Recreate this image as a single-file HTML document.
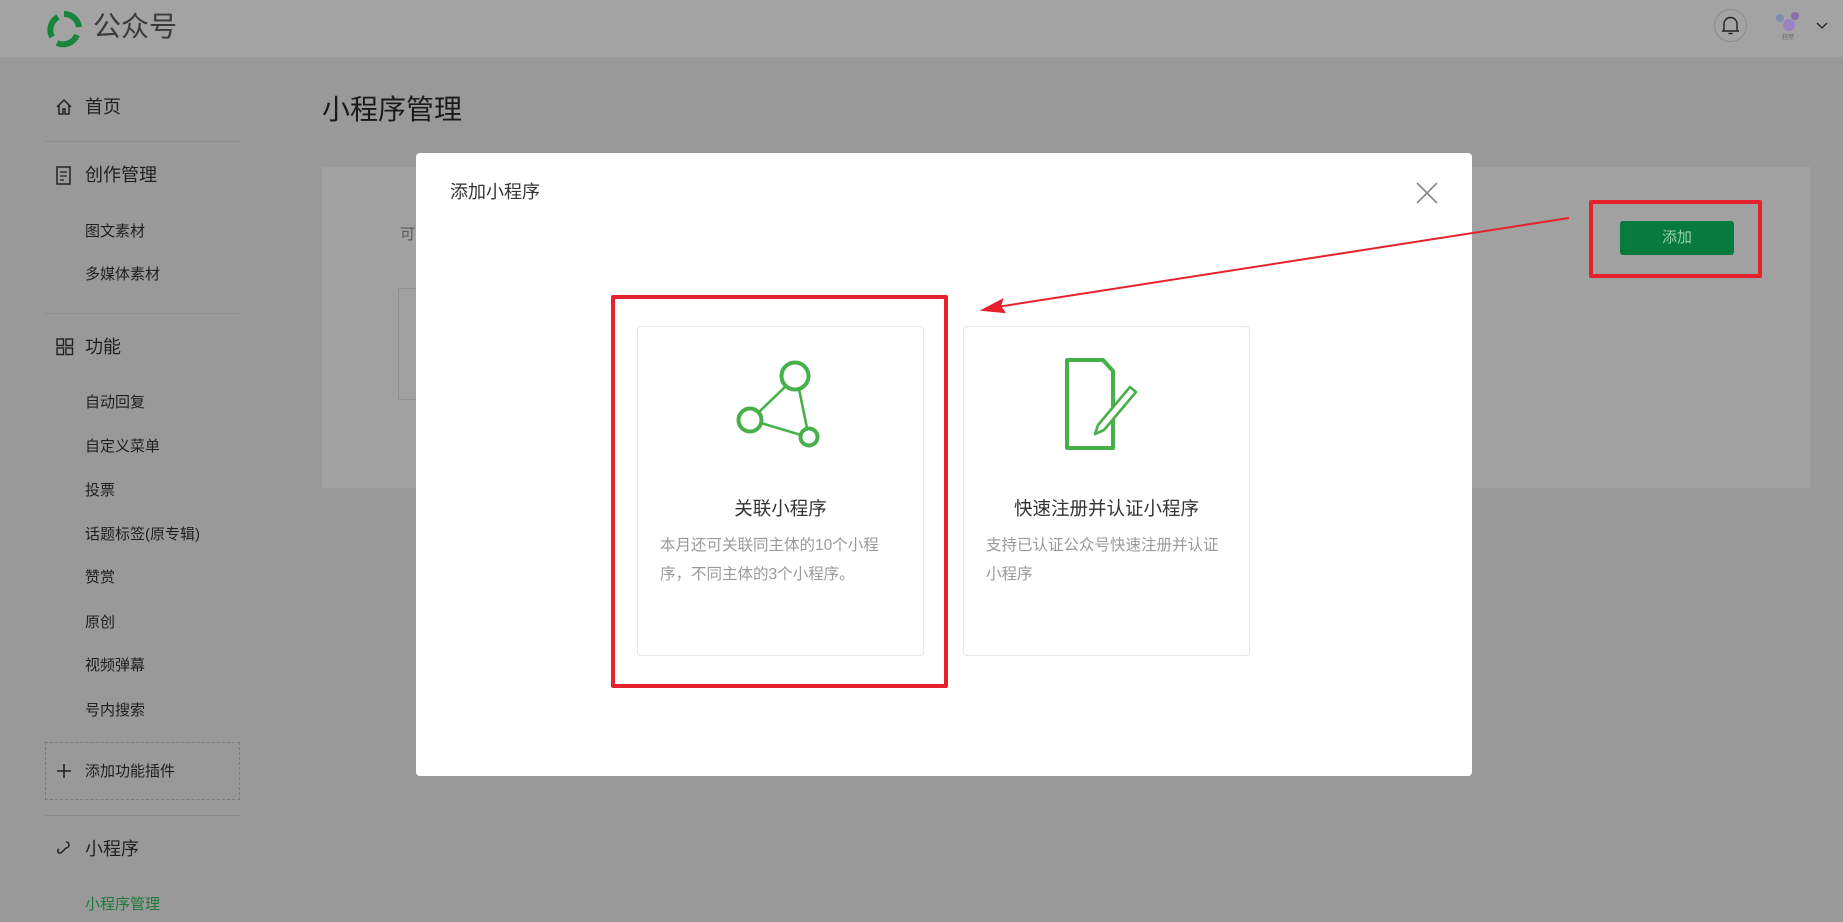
<!DOCTYPE html>
<html><head><meta charset="utf-8"><style>
*{margin:0;padding:0;box-sizing:border-box}
body{width:1843px;height:922px;overflow:hidden;background:#999;font-family:"Liberation Sans","Noto Sans CJK SC",sans-serif;position:relative;color:#1f1f1f}
.a{position:absolute;white-space:nowrap}
.hdr{left:0;top:0;width:1843px;height:57px;background:#a3a3a3}
.nav{font-size:18px;line-height:20px}
.sub{font-size:15px;line-height:18px;left:85px}
.div{height:1px;background:#8c8c8c;left:45px;width:195px}
.modal{left:416px;top:153px;width:1056px;height:623px;background:#fff;border-radius:4px}
.card{border:1px solid #e6e6e6;border-radius:4px;background:#fff;width:287px;height:330px;top:326px}
.ct{font-size:18.5px;color:#333;line-height:20px;width:287px;text-align:center}
.cd{font-size:15.5px;color:#9a9a9a;line-height:29px;white-space:normal}
.red{border:4px solid #e5212b;border-radius:2px}
</style></head><body>
<div class="a hdr"></div>
<svg class="a" style="left:44px;top:9px" width="40" height="40" viewBox="0 0 40 40"><g fill="none" stroke="#17853c" stroke-width="6"><path d="M8 28 A15 15 0 0 1 14 8"/><path d="M20 5 A15 15 0 0 1 35 18"/><path d="M33 26 A15 15 0 0 1 13 34"/></g></svg>
<div class="a" style="left:93px;top:10px;font-size:28px;line-height:34px;color:#3a3a3a">公众号</div>
<div class="a" style="left:1714px;top:9px;width:33px;height:33px;border:1px solid #8a8a8a;border-radius:50%"></div>
<svg class="a" style="left:1720px;top:15px" width="21" height="21" viewBox="0 0 21 21"><path d="M4 16 L4 9 A6.5 6.5 0 0 1 17 9 L17 16 Z M2 16 H19 M8.5 18.5 H12.5" fill="none" stroke="#222" stroke-width="1.4"/></svg>
<svg class="a" style="left:1773px;top:11px" width="30" height="30"><circle cx="7" cy="7" r="4" fill="#7c8fb0"/><circle cx="22" cy="5" r="4" fill="#8a6fb0"/><circle cx="16" cy="14" r="6" fill="#9c82c2"/><text x="9" y="28" font-size="6" fill="#666">轻然</text></svg>
<svg class="a" style="left:1816px;top:22px" width="12" height="8"><path d="M1 1 L6 6 L11 1" fill="none" stroke="#222" stroke-width="1.3"/></svg>

<svg class="a" style="left:55px;top:98px" width="18" height="18"><path d="M2 9 L9 2 L16 9 M4 7 V16 H8 V11 H10 V16 H14 V7" fill="none" stroke="#222" stroke-width="1.5"/></svg>
<div class="a nav" style="left:85px;top:97px">首页</div>
<div class="a div" style="top:141px"></div>
<svg class="a" style="left:56px;top:166px" width="16" height="19"><rect x="1" y="1" width="13" height="17" fill="none" stroke="#222" stroke-width="1.5"/><path d="M4 6 H11 M4 10 H11 M4 14 H8" stroke="#222" stroke-width="1.3"/></svg>
<div class="a nav" style="left:85px;top:165px">创作管理</div>
<div class="a sub" style="top:223px">图文素材</div>
<div class="a sub" style="top:266px">多媒体素材</div>
<div class="a div" style="top:313px"></div>
<svg class="a" style="left:56px;top:338px" width="18" height="18"><g fill="none" stroke="#222" stroke-width="1.4"><rect x="1" y="1" width="6.5" height="6.5"/><rect x="10" y="1" width="6.5" height="6.5"/><rect x="1" y="10" width="6.5" height="6.5"/><rect x="10" y="10" width="6.5" height="6.5"/></g></svg>
<div class="a nav" style="left:85px;top:337px">功能</div>
<div class="a sub" style="top:394px">自动回复</div>
<div class="a sub" style="top:438px">自定义菜单</div>
<div class="a sub" style="top:482px">投票</div>
<div class="a sub" style="top:526px">话题标签(原专辑)</div>
<div class="a sub" style="top:569px">赞赏</div>
<div class="a sub" style="top:614px">原创</div>
<div class="a sub" style="top:657px">视频弹幕</div>
<div class="a sub" style="top:702px">号内搜索</div>
<div class="a" style="left:45px;top:742px;width:195px;height:58px;border:1px dashed #7c7c7c"></div>
<svg class="a" style="left:56px;top:763px" width="16" height="16"><path d="M8 1 V15 M1 8 H15" stroke="#222" stroke-width="1.6"/></svg>
<div class="a sub" style="top:763px">添加功能插件</div>
<div class="a div" style="top:815px"></div>
<svg class="a" style="left:56px;top:840px" width="16" height="18"><path d="M10 2 C14 2 14 8 10 8 L6 12 C3 15 0 11 3 9 M6 6" fill="none" stroke="#222" stroke-width="1.5"/></svg>
<div class="a nav" style="left:85px;top:839px">小程序</div>
<div class="a sub" style="top:896px;color:#1f7a3a">小程序管理</div>

<div class="a" style="left:322px;top:93px;font-size:28px;line-height:34px;color:#1a1a1a">小程序管理</div>
<div class="a" style="left:322px;top:167px;width:1489px;height:321px;background:#a1a1a1"></div>
<div class="a" style="left:400px;top:223px;font-size:15px;color:#5a5a5a">可</div>
<div class="a" style="left:398px;top:288px;width:30px;height:112px;border:1px solid #8e8e8e;border-right:none"></div>
<div class="a" style="left:1620px;top:221px;width:114px;height:34px;background:#077a3e;border-radius:3px;color:#9acfae;font-size:15px;text-align:center;line-height:34px">添加</div>
<div class="a red" style="left:1589px;top:200px;width:173px;height:78px"></div>

<div class="a modal"></div>
<div class="a" style="left:450px;top:181px;font-size:18px;line-height:22px;color:#333">添加小程序</div>
<svg class="a" style="left:1416px;top:182px" width="22" height="22"><path d="M1 1 L21 21 M21 1 L1 21" stroke="#888" stroke-width="1.6"/></svg>

<div class="a card" style="left:637px"></div>
<div class="a card" style="left:963px"></div>
<svg class="a" style="left:720px;top:355px" width="110" height="100"><g fill="none" stroke="#47b04b" stroke-width="4"><circle cx="75" cy="21" r="13.5"/><circle cx="30" cy="65" r="11.5"/><circle cx="89" cy="82" r="8.5"/><path d="M39 57 L66 31 M79 34 L87 73 M41 68 L81 80" stroke-width="2.6"/></g></svg>
<div class="a ct" style="left:637px;top:499px">关联小程序</div>
<div class="a cd" style="left:660px;top:531px;width:270px">本月还可关联同主体的10个小程<br>序，不同主体的3个小程序。</div>
<svg class="a" style="left:1060px;top:354px" width="90" height="100"><path d="M7 6 H43 L53 17 V94 H7 Z" fill="none" stroke="#47b04b" stroke-width="4" stroke-linejoin="round"/><path d="M70 33 L76 38 L44 76 L35 80 L38 71 Z" fill="#fff" stroke="#47b04b" stroke-width="2.6" stroke-linejoin="round"/></svg>
<div class="a ct" style="left:963px;top:499px">快速注册并认证小程序</div>
<div class="a cd" style="left:986px;top:531px;width:260px">支持已认证公众号快速注册并认证<br>小程序</div>
<div class="a red" style="left:611px;top:295px;width:337px;height:393px"></div>

<svg class="a" style="left:0;top:0" width="1843" height="922"><path d="M1569 218 L997 307" stroke="#e5212b" stroke-width="2"/><path d="M983 310 L1002 300 L1000 306 L1004 312 Z" fill="#e5212b" stroke="#e5212b" stroke-width="2"/></svg>
</body></html>
